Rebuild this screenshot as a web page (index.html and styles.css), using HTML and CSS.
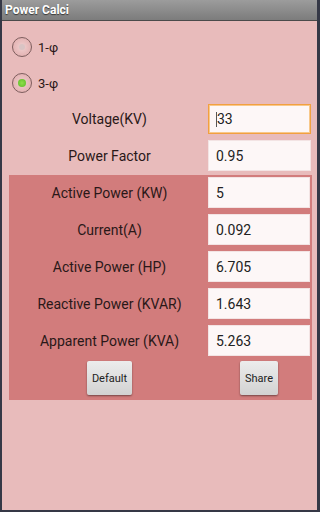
FILE: index.html
```html
<!DOCTYPE html>
<html lang="en">
<head>
    <meta charset="UTF-8">
    <meta name="viewport" content="width=device-width, initial-scale=1.0">
    <title>Power Calci</title>
    <link rel="stylesheet" href="styles.css">
</head>
<body>
    <div class="screen">
        <div class="titlebar">Power Calci</div>

        <div class="content">
            <div class="radio-row">
                <span class="radio"></span>
                <span class="radio-label">1-φ</span>
            </div>
            <div class="radio-row">
                <span class="radio checked"></span>
                <span class="radio-label">3-φ</span>
            </div>

            <div class="inputs">
                <div class="row">
                    <span class="label">Voltage(KV)</span>
                    <div class="field focused"><span class="caret"></span>33</div>
                </div>
                <div class="row">
                    <span class="label">Power Factor</span>
                    <div class="field">0.95</div>
                </div>
            </div>

            <div class="results">
                <div class="row">
                    <span class="label">Active Power (KW)</span>
                    <div class="field">5</div>
                </div>
                <div class="row">
                    <span class="label">Current(A)</span>
                    <div class="field">0.092</div>
                </div>
                <div class="row">
                    <span class="label">Active Power (HP)</span>
                    <div class="field">6.705</div>
                </div>
                <div class="row">
                    <span class="label">Reactive Power (KVAR)</span>
                    <div class="field">1.643</div>
                </div>
                <div class="row">
                    <span class="label">Apparent Power (KVA)</span>
                    <div class="field">5.263</div>
                </div>
                <div class="row buttons">
                    <div class="cell"><button class="btn">Default</button></div>
                    <div class="cell"><button class="btn">Share</button></div>
                </div>
            </div>
        </div>
    </div>
</body>
</html>
```

FILE: styles.css
```css
body {
    margin: 0;
    font-family: Roboto, "Liberation Sans", sans-serif;
    background-color: #2e3140;
}
.screen {
    width: 320px;
    height: 512px;
    box-sizing: border-box;
    background-color: #e8bbbb;
    border-left: 2px solid #353846;
    border-right: 3px solid #353846;
    border-bottom: 2px solid #353846;
    overflow: hidden;
}
.titlebar {
    height: 20px;
    line-height: 20px;
    padding-left: 3px;
    background: linear-gradient(#9c9c9c, #7c7c7c);
    border-bottom: 1px solid #4a4a4a;
    color: #fff;
    font-size: 12px;
    font-weight: bold;
    text-shadow: 0 1px 1px rgba(0, 0, 0, 0.6);
}
.content {
    padding: 8px 5px 0 7px;
}
.radio-row {
    height: 36px;
    display: flex;
    align-items: center;
    padding-left: 3px;
}
.radio {
    width: 18px;
    height: 18px;
    border: 1px solid #7d5e5e;
    border-radius: 50%;
    background: radial-gradient(circle, #f0d0d0 0%, #e4b4b4 70%);
    display: flex;
    align-items: center;
    justify-content: center;
}
.radio::after {
    content: "";
    width: 6px;
    height: 6px;
    border-radius: 50%;
    background-color: #d9c4c4;
}
.radio.checked::after {
    width: 8px;
    height: 8px;
    background: radial-gradient(circle, #8fe04a, #5cb82a);
}
.radio-label {
    margin-left: 6px;
    font-size: 13px;
    color: #2a1818;
}
.inputs {
    margin-top: 3px;
    padding: 0 1px 0 2px;
    display: flex;
    flex-direction: column;
    gap: 6px;
}
.results {
    margin-top: 4px;
    padding: 2px 2px 5px 2px;
    background-color: #d27c7c;
    display: flex;
    flex-direction: column;
    gap: 6px;
}
.row {
    display: grid;
    grid-template-columns: 1fr 102px;
    align-items: center;
}
.inputs .row {
    grid-template-columns: 1fr 103px;
}
.label {
    text-align: center;
    font-size: 14px;
    color: #2a1818;
}
.field {
    height: 31px;
    box-sizing: border-box;
    background-color: #fdf7f7;
    border: 1px solid #f3e4e4;
    padding-left: 7px;
    display: flex;
    align-items: center;
    font-size: 14px;
    color: #222;
}
.field.focused {
    height: 30px;
    border: 1px solid #f2a040;
    box-shadow: inset 0 0 0 1px #f8c88a;
}
.caret {
    width: 1px;
    height: 15px;
    background-color: #555;
}
.buttons {
    margin-top: -1px;
    align-items: start;
}
.cell {
    display: flex;
    justify-content: center;
}
.btn {
    height: 34px;
    padding: 0 5px;
    border: none;
    border-radius: 2px;
    background: linear-gradient(#ececec, #d2d2d2);
    box-shadow: 0 1px 2px rgba(0, 0, 0, 0.45);
    font-family: Roboto, "Liberation Sans", sans-serif;
    font-size: 11px;
    color: #222;
}
```
